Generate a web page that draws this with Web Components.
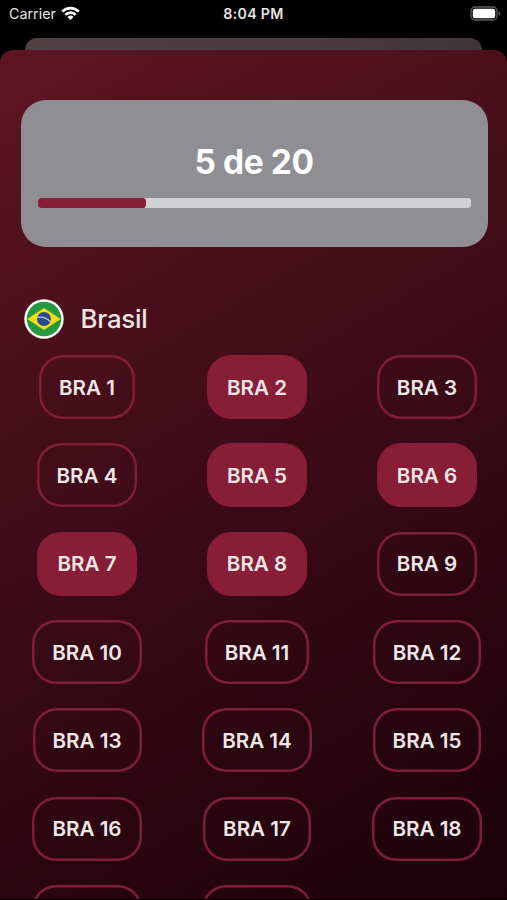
<!DOCTYPE html>
<html lang="pt-BR">
<head>
<meta charset="utf-8">
<title>Brasil</title>
<style>
    html, body {
        margin: 0;
        height: 100%;
        overflow: hidden;
        background: #000;
        font-family: Inter, "Liberation Sans", sans-serif;
    }
</style>
</head>
<body>
<album-screen></album-screen>

<script>
class StatusBar extends HTMLElement {
    constructor() {
        super();
        this.attachShadow({ mode: 'open' });
    }

    connectedCallback() {
        this.shadowRoot.innerHTML = `
            <style>
                :host {
                    display: grid;
                    grid-template-columns: 1fr auto 1fr;
                    align-items: center;
                    box-sizing: border-box;
                    height: 38px;
                    padding: 0 6px 11px 9px;
                    color: #e4e4e4;
                    font-size: 14.3px;
                    line-height: 18px;
                }
                .carrier {
                    display: flex;
                    align-items: center;
                    gap: 5.5px;
                }
                .time {
                    margin: 0 2px 0 -1px;
                    font-weight: 600;
                    font-size: 14.2px;
                    letter-spacing: 0.3px;
                }
                .battery {
                    justify-self: end;
                }
                svg {
                    display: block;
                }
            </style>
            <div class="carrier">
                <span>Carrier</span>
                <svg width="19" height="15" viewBox="0 0 19 15">
                    <g fill="none" stroke="#fff" stroke-width="2.6">
                        <path d="M1.2 5.6 A11.7 11.7 0 0 1 17.8 5.6"/>
                        <path d="M4.3 8.8 A7.3 7.3 0 0 1 14.7 8.8"/>
                    </g>
                    <path fill="#fff" d="M6.5 11 A4.3 4.3 0 0 1 12.5 11 L9.5 14.1 Z"/>
                </svg>
            </div>
            <span class="time">8:04 PM</span>
            <svg class="battery" width="31" height="15" viewBox="0 0 31 15">
                <rect x="1" y="1" width="26" height="13" rx="4" fill="none" stroke="#5c5c5c" stroke-width="1.3"/>
                <rect x="2.8" y="2.8" width="22.4" height="9.4" rx="2.2" fill="#fff"/>
                <path d="M28.6 5.3 q1.8 0.7 1.8 2.2 t-1.8 2.2 z" fill="#5c5c5c"/>
            </svg>
        `;
    }
}

class ProgressCard extends HTMLElement {
    constructor() {
        super();
        this.attachShadow({ mode: 'open' });
    }

    connectedCallback() {
        const value = Number(this.getAttribute('value'));
        const total = Number(this.getAttribute('total'));

        this.shadowRoot.innerHTML = `
            <style>
                :host {
                    display: flex;
                    flex-direction: column;
                    box-sizing: border-box;
                    height: 147px;
                    padding: 41px 17px 0;
                    border-radius: 25px;
                    background: #8f8e93;
                }
                .label {
                    color: #fff;
                    font-size: 33.5px;
                    font-weight: 700;
                    letter-spacing: -0.4px;
                    line-height: 42px;
                    text-align: center;
                }
                .track {
                    height: 10px;
                    margin-top: 15px;
                    border-radius: 3px;
                    background: #d1d0d2;
                }
                .bar {
                    width: ${value / total * 100}%;
                    height: 100%;
                    border-radius: 3.5px;
                    background: #881d36;
                }
            </style>
            <div class="label">${value} de ${total}</div>
            <div class="track"><div class="bar"></div></div>
        `;
    }
}

class TeamHeader extends HTMLElement {
    constructor() {
        super();
        this.attachShadow({ mode: 'open' });
    }

    connectedCallback() {
        this.shadowRoot.innerHTML = `
            <style>
                :host {
                    display: flex;
                    align-items: center;
                    gap: 17px;
                    height: 39px;
                    color: #f0e6e8;
                    font-size: 25.8px;
                    font-weight: 500;
                    letter-spacing: -0.2px;
                }
                svg {
                    display: block;
                }
            </style>
            <svg width="40" height="40" viewBox="0 0 40 40">
                <circle cx="20" cy="20" r="19.7" fill="#fff"/>
                <circle cx="20" cy="20" r="17.3" fill="#249b42"/>
                <path d="M3.4 20 L20 9 L36.6 20 L20 31 Z" fill="#f8dc12"/>
                <circle cx="20" cy="20" r="7" fill="#284b96"/>
                <path d="M13.3 18.3 Q21 17 26.4 22.8" fill="none" stroke="#b9cbe3" stroke-width="1.3"/>
            </svg>
            <slot></slot>
        `;
    }
}

class StickerChip extends HTMLElement {
    constructor() {
        super();
        this.attachShadow({ mode: 'open' });
    }

    connectedCallback() {
        this.shadowRoot.innerHTML = `
            <style>
                :host {
                    display: flex;
                    align-items: center;
                    box-sizing: border-box;
                    height: 64px;
                    padding: 0 20px;
                    border-radius: 24px;
                    box-shadow: inset 0 0 0 2.5px #7f1e38;
                    color: #f0e6e8;
                    font-size: 20.6px;
                    font-weight: 630;
                    white-space: nowrap;
                }
                :host([owned]) {
                    box-shadow: none;
                    background: #881e35;
                }
                :host(:empty) {
                    width: 110px;
                }
            </style>
            <slot></slot>
        `;
    }
}

class StickerGrid extends HTMLElement {
    constructor() {
        super();
        this.attachShadow({ mode: 'open' });
    }

    connectedCallback() {
        const code = this.getAttribute('code');
        const count = Number(this.getAttribute('count'));
        const labelled = Number(this.getAttribute('labelled'));
        const owned = this.getAttribute('owned').split(',').map(Number);
        const numbers = Array.from({ length: count }, (_, i) => i + 1);

        // chips below the fold stay unlabelled
        this.shadowRoot.innerHTML = `
            <style>
                :host {
                    display: grid;
                    grid-template-columns: repeat(3, 170px);
                    justify-items: center;
                    row-gap: 24.35px;
                }
            </style>
            ${numbers
                .map(n => `<sticker-chip ${owned.includes(n) ? 'owned' : ''}>${n <= labelled ? `${code} ${n}` : ''}</sticker-chip>`)
                .join('')
            }
        `;
    }
}

class AlbumScreen extends HTMLElement {
    constructor() {
        super();
        this.attachShadow({ mode: 'open' });
    }

    connectedCallback() {
        this.shadowRoot.innerHTML = `
            <style>
                :host {
                    display: flex;
                    flex-direction: column;
                    width: 507px;
                    height: 899px;
                    overflow: hidden;
                }
                /* the screen behind the sheet, only its top edge shows */
                .behind {
                    flex: none;
                    height: 12px;
                    margin: 0 25px;
                    border-radius: 12px 12px 0 0;
                    background: linear-gradient(90deg, #504044, #43363b);
                }
                .sheet {
                    flex: 1;
                    min-height: 0;
                    overflow: hidden;
                    border-radius: 13px 13px 0 0;
                    background: linear-gradient(150deg, #5e1625 0%, #55121f 14%, #3d0b18 48%, #2a0611 74%, #1b0109 100%);
                }
                progress-card {
                    margin: 49.5px 19.5px 0 20.5px;
                }
                team-header {
                    margin: 52.5px 24px 0 23.5px;
                }
                sticker-grid {
                    margin: 17.1px 0 0 2px;
                }
            </style>
            <status-bar></status-bar>
            <div class="behind"></div>
            <div class="sheet">
                <progress-card value="5" total="20"></progress-card>
                <team-header>Brasil</team-header>
                <sticker-grid code="BRA" count="20" labelled="18" owned="2,5,6,7,8"></sticker-grid>
            </div>
        `;
    }
}

customElements.define('status-bar', StatusBar);
customElements.define('progress-card', ProgressCard);
customElements.define('team-header', TeamHeader);
customElements.define('sticker-chip', StickerChip);
customElements.define('sticker-grid', StickerGrid);
customElements.define('album-screen', AlbumScreen);
</script>
</body>
</html>
